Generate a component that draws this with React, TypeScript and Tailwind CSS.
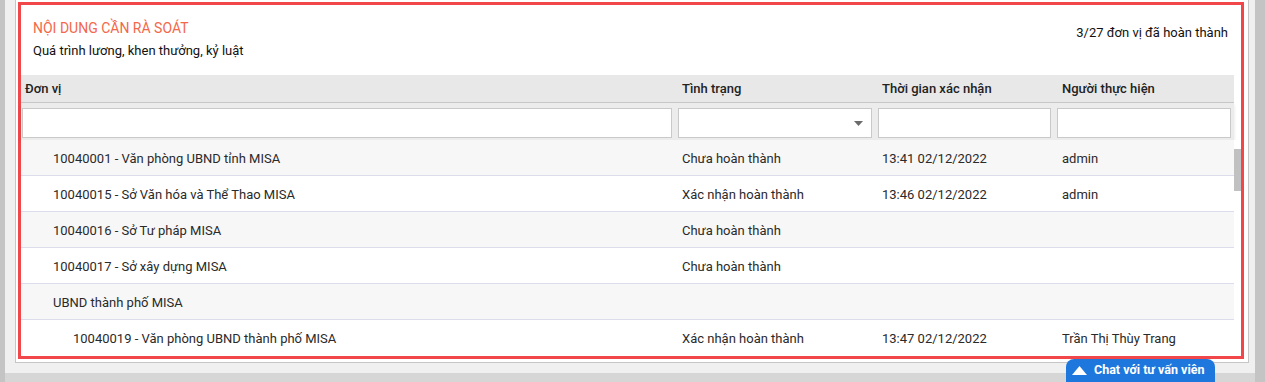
import React from "react";

const rows = [
  { name: "10040001 - Văn phòng UBND tỉnh MISA", level: 1, status: "Chưa hoàn thành", time: "13:41 02/12/2022", user: "admin" },
  { name: "10040015 - Sở Văn hóa và Thể Thao MISA", level: 1, status: "Xác nhận hoàn thành", time: "13:46 02/12/2022", user: "admin" },
  { name: "10040016 - Sở Tư pháp MISA", level: 1, status: "Chưa hoàn thành", time: "", user: "" },
  { name: "10040017 - Sở xây dựng MISA", level: 1, status: "Chưa hoàn thành", time: "", user: "" },
  { name: "UBND thành phố MISA", level: 1, status: "", time: "", user: "" },
  { name: "10040019 - Văn phòng UBND thành phố MISA", level: 2, status: "Xác nhận hoàn thành", time: "13:47 02/12/2022", user: "Trần Thị Thùy Trang" },
];

export default function App() {
  return (
    <div
      className="relative flex h-[382px] w-[1265px] overflow-hidden bg-[#f0f0f0] text-[#212121]"
      style={{ fontFamily: "Roboto, 'Noto Sans', sans-serif" }}
    >
      <div className="h-full w-[5px] shrink-0 bg-[#c4c4c4]" />
      <div className="flex h-full flex-1 flex-col">
        <div className="flex flex-1 pl-[10px]">
          <div className="h-[363px] w-[1234px] border border-t-0 border-[#c6c6c6] bg-white pl-[2px] pt-[2px]">
            <div className="flex h-[357px] w-[1226px] flex-col border-[3px] border-[#f1474b]">
              {/* header */}
              <div className="relative h-[70px] shrink-0">
                <div className="pl-[12px] pt-[15px] text-[14px] leading-[16px] text-[#f4674a]">NỘI DUNG CẦN RÀ SOÁT</div>
                <div className="pl-[12px] pt-[7px] text-[13px] leading-[16px] text-[#111]">Quá trình lương, khen thưởng, kỷ luật</div>
                <div className="absolute right-[13px] top-[20px] text-[13px] leading-[16px] text-[#111]">3/27 đơn vị đã hoàn thành</div>
              </div>
              {/* table */}
              <div className="flex w-[1213px] flex-col">
                <div className="flex h-[28px] items-center border-b border-[#c8c8c8] bg-[#e8e8e8] pt-[1px] text-[13px] font-medium text-[#222]">
                  <div className="w-[655px] pl-[4px]">Đơn vị</div>
                  <div className="w-[200px] pl-[6px]">Tình trạng</div>
                  <div className="w-[180px] pl-[6px]">Thời gian xác nhận</div>
                  <div className="w-[178px] pl-[6px]">Người thực hiện</div>
                </div>
                <div className="flex h-[37px] items-start bg-[#ececec] pt-[5px] shadow-[0_2px_3px_rgba(0,0,0,0.12)]">
                  <div className="ml-[1px] mr-[3px] h-[30px] w-[651px] border border-[#c9c9c9] bg-white" />
                  <div className="relative mx-[3px] h-[30px] w-[194px] border border-[#c9c9c9] bg-white">
                    <svg className="absolute right-[8px] top-[12px]" width="9" height="5" viewBox="0 0 9 5">
                      <path d="M0 0 L9 0 L4.5 5 Z" fill="#6b6b6b" />
                    </svg>
                  </div>
                  <div className="mx-[3px] h-[30px] w-[174px] border border-[#c9c9c9] bg-white" />
                  <div className="mx-[3px] h-[30px] w-[174px] border border-[#c9c9c9] bg-white" />
                </div>
              </div>
              <div className="relative flex flex-1">
                <div className="flex w-[1213px] flex-col">
                  {rows.map((r, i) => (
                    <div
                      key={i}
                      className={`flex h-[36px] shrink-0 items-center pt-[2px] text-[13px] text-[#2a2a2a] ${i < 5 ? "border-b border-[#dcdcec]" : ""} ${i % 2 === 0 ? "bg-[#f7f7f7]" : "bg-white"}`}
                    >
                      <div className={`w-[655px] ${r.level === 2 ? "pl-[52px]" : "pl-[32px]"}`}>{r.name}</div>
                      <div className="w-[200px] pl-[6px]">{r.status}</div>
                      <div className="w-[180px] pl-[6px]">{r.time}</div>
                      <div className="w-[178px] pl-[6px]">{r.user}</div>
                    </div>
                  ))}
                </div>
                <div className="w-[7px] bg-white pt-[9px]">
                  <div className="h-[42px] w-[7px] bg-[#c1c1c1]" />
                </div>
              </div>
            </div>
          </div>
        </div>
        <div className="h-[9px] w-full bg-[#d6d6d6]" />
      </div>
      <div className="h-full w-[10px] shrink-0 bg-[#c4c4c4]" />

      <div className="absolute left-[1066px] top-[359px] flex h-[23px] w-[149px] items-center rounded-t-[8px] bg-[#1d77dc] pl-[6px] text-[12.5px] font-bold text-white">
        <svg width="15" height="9" viewBox="0 0 15 9" className="mr-[7px]">
          <path d="M0 9 L7.5 0 L15 9 Z" fill="#fff" />
        </svg>
        <span>Chat với tư vấn viên</span>
      </div>
    </div>
  );
}
